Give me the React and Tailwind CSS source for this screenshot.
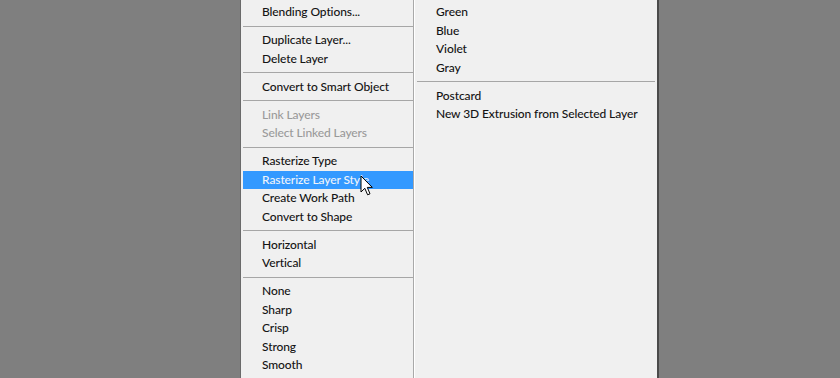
import React from "react";

const leftGroups = [
  [{ t: "Blending Options..." }],
  [{ t: "Duplicate Layer..." }, { t: "Delete Layer" }],
  [{ t: "Convert to Smart Object" }],
  [{ t: "Link Layers", d: true }, { t: "Select Linked Layers", d: true }],
  [
    { t: "Rasterize Type" },
    { t: "Rasterize Layer Style", h: true },
    { t: "Create Work Path" },
    { t: "Convert to Shape" },
  ],
  [{ t: "Horizontal" }, { t: "Vertical" }],
  [{ t: "None" }, { t: "Sharp" }, { t: "Crisp" }, { t: "Strong" }, { t: "Smooth" }],
];

const rightGroups = [
  [{ t: "Green" }, { t: "Blue" }, { t: "Violet" }, { t: "Gray" }],
  [{ t: "Postcard" }, { t: "New 3D Extrusion from Selected Layer" }],
];

function Item({ item, pad }) {
  const color = item.h
    ? "bg-[#3399ff] text-[#eef4fb]"
    : item.d
    ? "text-[#9a9a9a]"
    : "text-[#141414]";
  return (
    <div className={`relative h-[18.5px] flex items-center whitespace-nowrap ${pad} ${color}`}>
      {item.t}
      {item.h && (
        <svg
          className="absolute left-[117px] top-[4px]"
          width="13"
          height="22"
          viewBox="0 0 13 22"
        >
          <path
            d="M1 1 L1 17 L4.8 13.3 L7.6 19.8 L10 18.8 L7.3 12.4 L12.3 12.4 Z"
            fill="#ffffff"
            stroke="#000000"
            strokeWidth="1"
            strokeLinejoin="miter"
          />
        </svg>
      )}
    </div>
  );
}

function Sep({ inset }) {
  return (
    <div className={`h-[9.5px] flex items-center ${inset}`}>
      <div className="w-full h-px bg-[#a6a6a6]" />
    </div>
  );
}

function Column({ groups, className, pad, inset }) {
  return (
    <div className={`flex flex-col pt-[3px] ${className}`}>
      {groups.map((g, gi) => (
        <React.Fragment key={gi}>
          {gi > 0 && <Sep inset={inset} />}
          {g.map((it, i) => (
            <Item key={i} item={it} pad={pad} />
          ))}
        </React.Fragment>
      ))}
    </div>
  );
}

export default function App() {
  return (
    <div
      className="w-[840px] h-[378px] bg-[#7f7f7f] flex overflow-hidden text-[12px] font-medium tracking-[-0.1px]"
      style={{ fontFamily: 'Lato, "Open Sans", sans-serif' }}
    >
      <div className="w-[240px] shrink-0" />
      <div className="flex h-full bg-[#f0f0f0] border-l border-[#6a6a6a] border-r-2 border-r-[#4a4a4a]">
        <Column
          groups={leftGroups}
          className="w-[172px] pl-[2px]"
          pad="pl-[19px]"
          inset=""
        />
        <div className="w-px h-full bg-[#a9a9a9]" />
        <div className="w-px h-full bg-[#ffffff]" />
        <Column
          groups={rightGroups}
          className="w-[242px] pl-[2px]"
          pad="pl-[19px]"
          inset="pr-[2px]"
        />
      </div>
    </div>
  );
}
